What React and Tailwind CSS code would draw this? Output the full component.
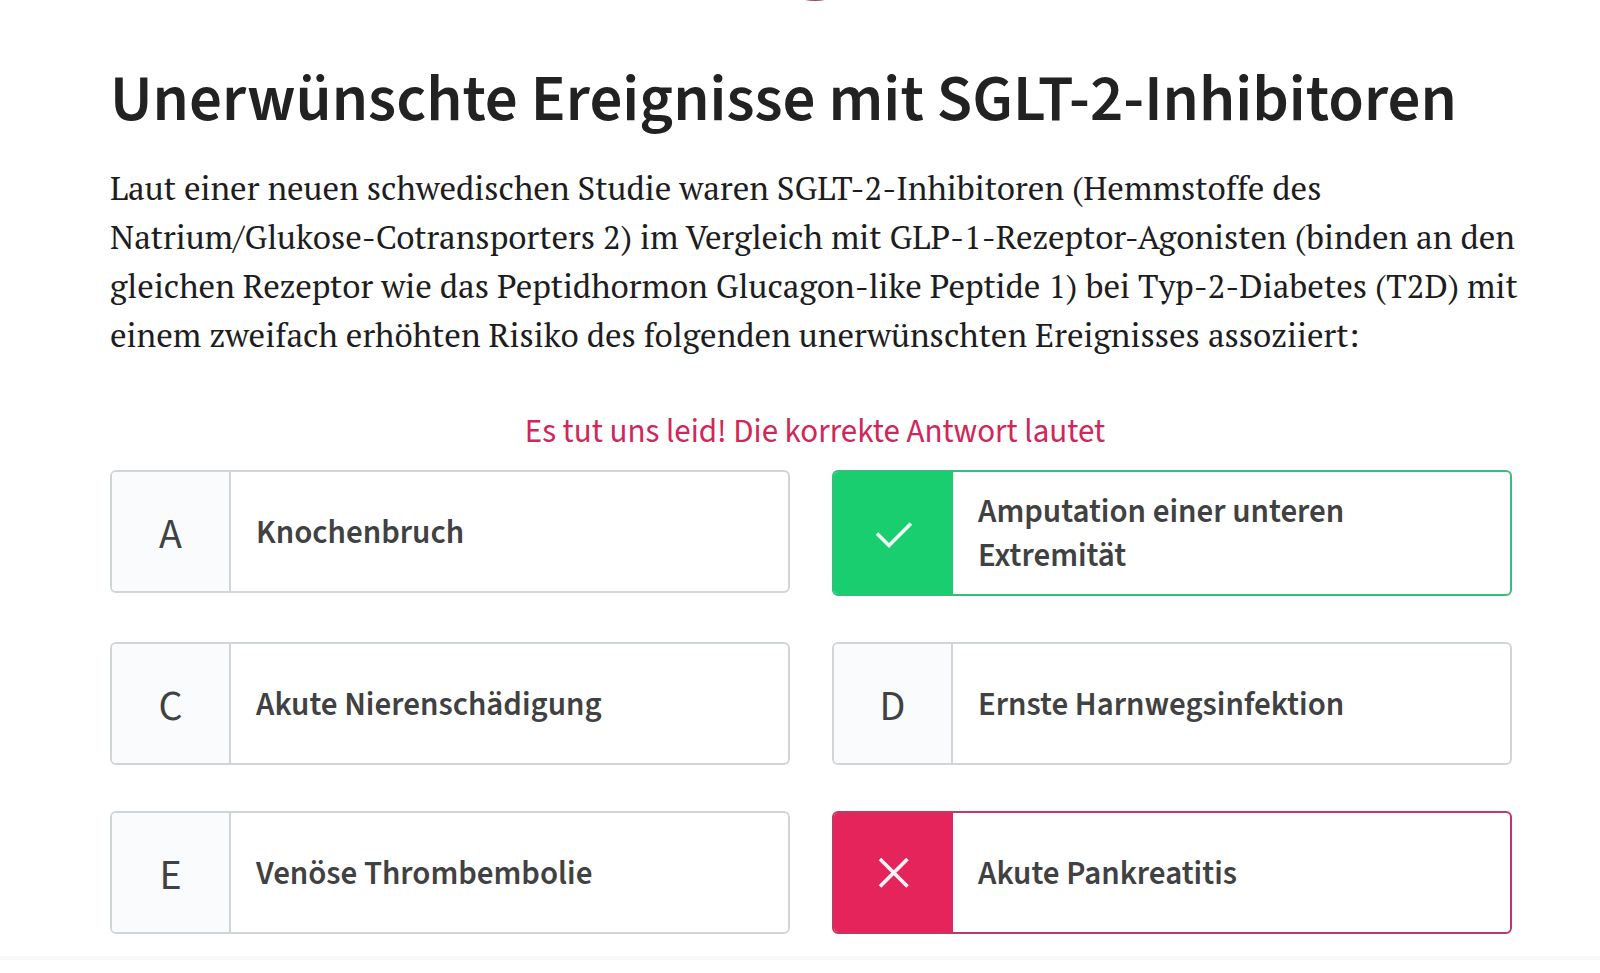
// src/components/QuizQuestion.jsx
import clsx from "clsx";

const answers = [
    { id: "A", text: "Knochenbruch" },
    { id: "B", text: "Amputation einer unteren Extremität", status: "correct" },
    { id: "C", text: "Akute Nierenschädigung" },
    { id: "D", text: "Ernste Harnwegsinfektion" },
    { id: "E", text: "Venöse Thrombembolie" },
    { id: "F", text: "Akute Pankreatitis", status: "wrong" },
];

const CheckMark = () => (
    <svg className="w-9 h-9" viewBox="0 0 36 36" fill="none" stroke="#f1fff6" strokeWidth="3.6" aria-hidden="true">
        <path d="M1 18.5 L13 30.5 L35 8.5" />
    </svg>
);

const CrossMark = () => (
    <svg className="w-9 h-9" viewBox="0 0 36 36" fill="none" stroke="#fff5f8" strokeWidth="3.6" aria-hidden="true">
        <path d="M4 4 L31.5 31.5 M31.5 4 L4 31.5" />
    </svg>
);

const AnswerOption = ({ answer }) => {
    const { id, text, status } = answer;

    return (
        <button
            type="button"
            aria-label={status ? `${id}: ${text}` : undefined}
            className={clsx(
                "flex items-stretch w-full min-h-[123px] rounded-md border-2 bg-white text-left overflow-hidden",
                !status && "border-[#d0d6d8]",
                status === "correct" && "border-[#35bd7b]",
                status === "wrong" && "border-[#bd3b63]"
            )}
        >
            <span
                className={clsx(
                    "flex items-center justify-center shrink-0 w-[119px] text-[42px] leading-[44px] text-[#3f4142]",
                    !status && "pt-1.5 border-r-2 border-[#d0d6d8] bg-[#f9fbfd]",
                    status === "correct" && "bg-[#18ce6f]",
                    status === "wrong" && "bg-[#e4245b]"
                )}
            >
                {status === "correct" && <CheckMark />}
                {status === "wrong" && <CrossMark />}
                {!status && id}
            </span>
            <span className="flex items-center flex-1 pl-[25px] pr-10 pt-[18px] pb-4 text-[33px] leading-[44px] font-semibold text-[#3f4142]">
                {text}
            </span>
        </button>
    );
};

const App = () => {
    return (
        <div className="min-h-screen bg-white font-['Source_Sans_Pro','Source_Sans_3','Noto_Sans_CJK_SC','Noto_Sans',sans-serif]">
            <main className="pl-[110px] pr-20 pb-[22px] border-b-4 border-[#f8f8f8]">
                {/* Lower edge of the badge above the question */}
                <div className="flex justify-center h-[60px]">
                    <svg className="w-8 h-[2px]" viewBox="0 0 32 2" aria-hidden="true">
                        <circle cx="16" cy="-49" r="50" fill="#a3405f" />
                    </svg>
                </div>

                <h1 className="text-[65px] leading-[80px] font-semibold text-[#222222] whitespace-nowrap">
                    Unerwünschte Ereignisse mit SGLT-2-Inhibitoren
                </h1>

                <p className="mt-[23px] text-[33px] leading-[49px] text-[#1d1d1f] whitespace-nowrap font-['PT_Serif','Liberation_Serif',serif]">
                    Laut einer neuen schwedischen Studie waren SGLT-2-Inhibitoren (Hemmstoffe des
                    <br />
                    Natrium/Glukose-Cotransporters 2) im Vergleich mit GLP-1-Rezeptor-Agonisten (binden an den
                    <br />
                    gleichen Rezeptor wie das Peptidhormon Glucagon-like Peptide 1) bei Typ-2-Diabetes (T2D) mit
                    <br />
                    einem zweifach erhöhten Risiko des folgenden unerwünschten Ereignisses assoziiert:
                </p>

                <p className="mt-[51px] text-center text-[33px] leading-[44px] text-[#d1265a]">
                    Es tut uns leid! Die korrekte Antwort lautet
                </p>

                <div className="grid grid-cols-2 items-start gap-x-[42px] gap-y-[46px] mt-4 mr-2">
                    {answers.map(answer => (
                        <AnswerOption key={answer.id} answer={answer} />
                    ))}
                </div>
            </main>
        </div>
    );
};

export default App;
